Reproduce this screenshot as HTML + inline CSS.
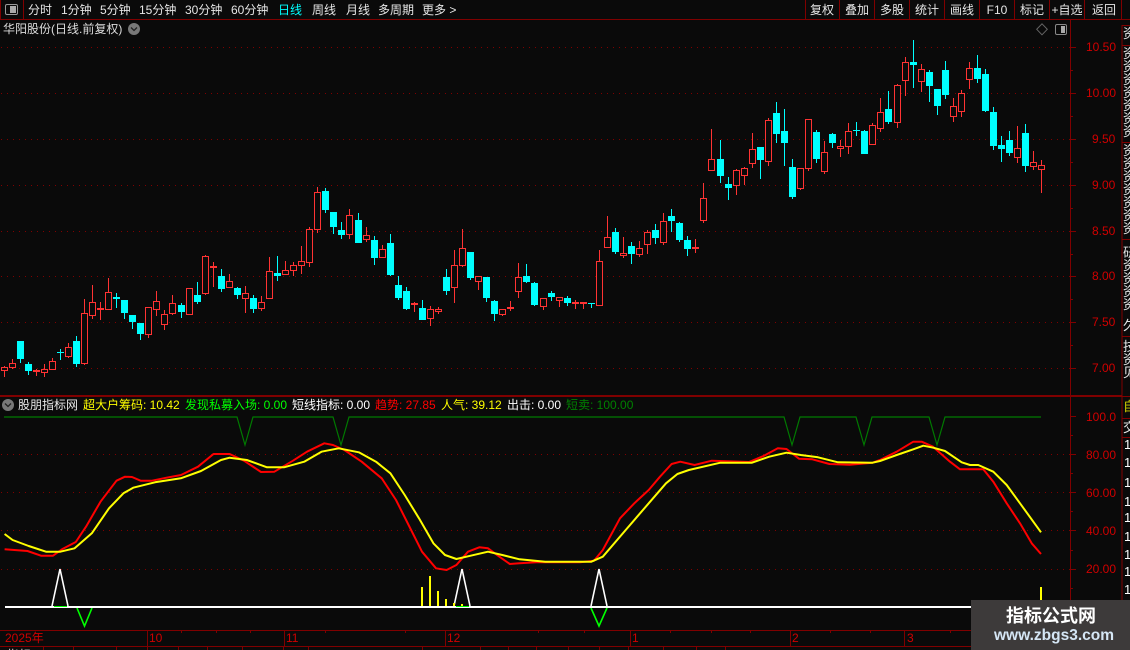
<!DOCTYPE html>
<html><head><meta charset="utf-8">
<style>
html,body{margin:0;padding:0;background:#0a0a0a;}
#r{position:relative;width:1130px;height:650px;overflow:hidden;background:#0a0a0a;font:12px/14px "Liberation Sans","WenQuanYi Zen Hei",sans-serif;color:#ddd;}
#r svg{position:absolute;left:0;top:0;}
.t{position:absolute;white-space:nowrap;}
.a{color:#d00000;left:1086px;}
.b{top:3px;color:#e6e6e6;}
.c{top:3px;width:34px;text-align:center;color:#e6e6e6;}
.i{top:398px;}
.d{top:631px;color:#d00000;}
.s{left:1123px;color:#e6e6e6;width:13px;font-size:13px;line-height:13px;white-space:normal;}
</style></head><body>
<div id="r">
<svg id="s" width="1130" height="650" viewBox="0 0 1130 650" shape-rendering="crispEdges">
<g id="grid" stroke="#800000" stroke-width="1" stroke-dasharray="1 5" fill="none">
<path d="M1 47.5H1070M1 93.5H1070M1 139.5H1070M1 185.5H1070M1 231.5H1070M1 276.5H1070M1 322.5H1070M1 368.5H1070M1 454.5H1070M1 492.5H1070M1 530.5H1070M1 569.5H1070"/>
</g>
<g stroke="#800000" stroke-width="1" fill="none">
<path d="M0 19.5H1130M0.5 0V19M23.5 0V19M805.5 0V19M839.5 0V19M874.5 0V19M909.5 0V19M944.5 0V19M979.5 0V19M1014.5 0V19M1049.5 0V19M1084.5 0V19M1121.5 0V19"/>
<path d="M1070.5 19V650M1122 25V650"/>
<path d="M1122 25.5H1130M1122 45.5H1130M1122 142.5H1130M1122 239.5H1130M1122 336.5H1130M1122 396.5H1130M1122 418.5H1130M1122 437.5H1130"/>
<path d="M1070 47.5h6M1070 93.5h6M1070 139.5h6M1070 185.5h6M1070 231.5h6M1070 276.5h6M1070 322.5h6M1070 368.5h6M1070 70.5h3M1070 116.5h3M1070 162.5h3M1070 208.5h3M1070 254.5h3M1070 299.5h3M1070 345.5h3"/>
<path d="M1070 416.5h6M1070 454.5h6M1070 492.5h6M1070 530.5h6M1070 569.5h6M1070 435.5h3M1070 473.5h3M1070 511.5h3M1070 550.5h3M1070 588.5h3"/>
<path d="M0 630.5H1070M0 646.5H1122"/>
<path d="M147.5 631V646M284.5 631V646M445.5 631V646M630.5 631V646M790.5 631V646M904.5 631V646"/>
<path d="M181.5 630v3M216.5 630v3M250.5 630v3M325.5 630v3M405.5 630v3M538.5 630v3M584.5 630v3M670.5 630v3M711.5 630v3M750.5 630v3M830.5 630v3M870.5 630v3M950.5 630v3M1000.5 630v3"/>
<path d="M43.5 647v3M73.5 647v3M116.5 647v3M147.5 647v3M178.5 647v3M207.5 647v3M242.5 647v3M283.5 647v3M308.5 647v3M422.5 647v3M480.5 647v3M508.5 647v3M536.5 647v3M568.5 647v3M599.5 647v3M628.5 647v3M663.5 647v3M696.5 647v3M725.5 647v3"/>
</g>
<rect x="0" y="395" width="1122" height="2" fill="#800000"/>
<g id="c"></g>
<g shape-rendering="auto" fill="none">
<polyline stroke="#007a00" stroke-width="1.2" points="4,417 237,417 245,445 253,417 333,417 341,445 349,417 784,417 792,445 800,417 856,417 864,445 872,417 929,417 937,445 945,417 1041,417"/>
<polyline stroke="#ff0000" stroke-width="2" stroke-linejoin="round" points="4.6,549.3 27.5,551 41,555.7 53,555.7 62,549.3 75.8,542 86,526.7 100.5,501.7 116.5,480.7 125,476.7 132,477 140.6,480.7 152,480.7 166.5,477.7 181,475 198,466.7 213.5,454 229.6,454 244,460.7 261,472 274.4,471.7 293,460.7 307,451.7 324.3,443.3 333,445 344.4,450 361.7,461.7 381.7,478.3 396,500 407.6,523 422,551.7 436,568.3 446.6,570 456.4,565 468,551.7 479.3,547.3 488,548.3 499.4,556.7 509.8,564 519.5,563.3 536.7,562.3 580,562.3 594,560.7 602.8,550 620,518.3 634.3,503.3 648.7,490 660,476.7 671.6,464 680.3,461.7 694.6,465 711.8,460.7 749,462 763.5,456 777.8,448.3 786.5,449 799,458.7 812.3,459.3 829.5,464 849.6,464.7 872.6,462.7 880,460 896.7,451.7 913.3,441.7 921.7,441.7 933,446.7 950,461.7 960,469.3 983.3,469.3 993.3,481.7 1006.7,503.3 1020,523.3 1031.7,543.3 1041,554"/>
<polyline stroke="#ffff00" stroke-width="2" stroke-linejoin="round" points="4.6,534 12.6,540 28.7,546 46,551.7 60.3,551.7 74.6,548.3 91.8,533.3 109,508.3 123.4,493.3 133.2,487.7 155,482.3 180.8,478.3 201,471 221,460 229.6,457.7 246.8,460 267,467.3 284,467.3 304.2,461.7 321.5,451.7 338.7,448.3 358.8,452.3 376,461.7 390.4,473.3 404.7,495 419,518.3 433.4,543.3 445,555 456.4,559 470.7,555.7 488,551.7 502.3,555 519.5,559.3 545.3,561.7 591.3,561.7 602.8,556.7 625.7,530 648.7,503.3 666,483.3 677.4,474 688.9,470 720.4,462.7 752,462.7 769.2,456.7 786.5,452.7 800.8,455 818,457.3 838,462.3 872.6,462.7 880,461 896.7,455 913.3,449.3 923.3,445.7 933.3,447.7 945,451 961.7,462.3 970,465 978.3,465 993.3,471.7 1006.7,485 1020,503.3 1041,532.3"/>
<path stroke="#fff" stroke-width="1.6" d="M52 606L60 569L68 606M454 606L462 569L470 606M591 606L599 569L607 606"/>
<path stroke="#00ff00" stroke-width="1.6" d="M77 608L84.5 626L92 608M591 608L599 626L607 608"/>
</g>
<rect x="5" y="606" width="1000" height="2" fill="#fff"/>
<path stroke="#00ff00" stroke-width="1" d="M54 606.5H67M456 606.5H469"/>
<path fill="#ffff00" d="M421 587h2v19h-2zM429 576h2v30h-2zM437 591h2v15h-2zM445 599h2v7h-2zM453 603h2v3h-2zM461 604h2v2h-2zM1040 587h2v19h-2z"/>
<rect x="971" y="600" width="159" height="50" fill="#3d3a3a"/>
<g shape-rendering="auto">
<rect x="5.5" y="4.5" width="12" height="10" rx="1.5" fill="none" stroke="#999"/><rect x="10" y="6" width="6" height="7" fill="#aaa"/>
<rect x="1055.5" y="24.5" width="11" height="10" rx="1.5" fill="none" stroke="#888"/><rect x="1061" y="26" width="4" height="7" fill="#aaa"/>
<path d="M1042 23.8L1047.3 29.3L1042 34.8L1036.7 29.3Z" fill="none" stroke="#666"/>
<circle cx="134" cy="29" r="6" fill="#787878"/><path d="M131 27.5L134 30.5L137 27.5" fill="none" stroke="#222" stroke-width="1.3"/>
<circle cx="8" cy="405" r="6" fill="#787878"/><path d="M5 403.5L8 406.5L11 403.5" fill="none" stroke="#222" stroke-width="1.3"/>
</g>
</svg>

<span class="t b" style="left:28px">分时</span>
<span class="t b" style="left:61px">1分钟</span>
<span class="t b" style="left:100px">5分钟</span>
<span class="t b" style="left:139px">15分钟</span>
<span class="t b" style="left:185px">30分钟</span>
<span class="t b" style="left:231px">60分钟</span>
<span class="t b" style="left:278px;color:#00ffff">日线</span>
<span class="t b" style="left:312px">周线</span>
<span class="t b" style="left:346px">月线</span>
<span class="t b" style="left:378px">多周期</span>
<span class="t b" style="left:422px">更多 &gt;</span>

<span class="t c" style="left:805px">复权</span>
<span class="t c" style="left:840px">叠加</span>
<span class="t c" style="left:875px">多股</span>
<span class="t c" style="left:910px">统计</span>
<span class="t c" style="left:945px">画线</span>
<span class="t c" style="left:980px">F10</span>
<span class="t c" style="left:1015px">标记</span>
<span class="t c" style="left:1050px">+自选</span>
<span class="t c" style="left:1087px">返回</span>

<span class="t" style="left:3px;top:22px;color:#dcdcdc">华阳股份(日线.前复权)</span>

<span class="t a" style="top:40px">10.50</span>
<span class="t a" style="top:86px">10.00</span>
<span class="t a" style="left:1092px;top:132px">9.50</span>
<span class="t a" style="left:1092px;top:178px">9.00</span>
<span class="t a" style="left:1092px;top:224px">8.50</span>
<span class="t a" style="left:1092px;top:269px">8.00</span>
<span class="t a" style="left:1092px;top:315px">7.50</span>
<span class="t a" style="left:1092px;top:361px">7.00</span>

<span class="t i" style="left:18px;color:#e6e6e6">股朋指标网</span>
<span class="t i" style="left:83px;color:#ffff00">超大户筹码: 10.42</span>
<span class="t i" style="left:185px;color:#00ff00">发现私募入场: 0.00</span>
<span class="t i" style="left:292px;color:#fff">短线指标: 0.00</span>
<span class="t i" style="left:375px;color:#ff0000">趋势: 27.85</span>
<span class="t i" style="left:441px;color:#ffff00">人气: 39.12</span>
<span class="t i" style="left:507px;color:#fff">出击: 0.00</span>
<span class="t i" style="left:566px;color:#008000">短卖: 100.00</span>

<span class="t a" style="top:410px">100.0</span>
<span class="t a" style="top:448px">80.00</span>
<span class="t a" style="top:486px">60.00</span>
<span class="t a" style="top:524px">40.00</span>
<span class="t a" style="top:562px">20.00</span>

<span class="t d" style="left:5px">2025年</span>
<span class="t d" style="left:149px">10</span>
<span class="t d" style="left:286px">11</span>
<span class="t d" style="left:447px">12</span>
<span class="t d" style="left:632px">1</span>
<span class="t d" style="left:792px">2</span>
<span class="t d" style="left:907px">3</span>
<span class="t" style="left:7px;top:648px;color:#ddd">指标</span>
<span class="t" style="left:50px;top:648px;color:#ddd">1</span>

<div class="t s" style="top:27px">资</div>
<div class="t s" style="top:47px">资<br>资<br>资<br>资<br>资<br>资<br>资</div>
<div class="t s" style="top:144px">资<br>资<br>资<br>资<br>资<br>资<br>资</div>
<div class="t s" style="top:246px">研<br>资<br>资<br>资<br>资</div>
<div class="t s" style="top:319px">久</div>
<div class="t s" style="top:340px">技<br>资<br>见</div>
<div class="t s" style="top:400px;color:#cccc00">自</div>
<div class="t s" style="top:421px">交</div>
<span class="t" style="left:1124px;top:438px;color:#fff;font-size:13px">1</span>
<span class="t" style="left:1124px;top:456px;color:#fff;font-size:13px">1</span>
<span class="t" style="left:1124px;top:476px;color:#fff;font-size:13px">1</span>
<span class="t" style="left:1124px;top:495px;color:#fff;font-size:13px">1</span>
<span class="t" style="left:1124px;top:511px;color:#fff;font-size:13px">1</span>
<span class="t" style="left:1124px;top:530px;color:#fff;font-size:13px">1</span>
<span class="t" style="left:1124px;top:548px;color:#fff;font-size:13px">1</span>
<span class="t" style="left:1124px;top:565px;color:#fff;font-size:13px">1</span>
<span class="t" style="left:1124px;top:583px;color:#fff;font-size:13px">1</span>

<span class="t" style="left:1006px;top:606px;font:bold 18px/20px 'Liberation Sans','Noto Sans CJK SC',sans-serif;color:#fff">指标公式网</span>
<span class="t" style="left:994px;top:628px;font:bold 15.5px/16px 'Liberation Sans',sans-serif;color:#d5e6f5">www.zbgs3.com</span>
</div>
<script>
var A=[
[0,558,562,572,590],[0,538,550,563,566],[1,483,483,537,549],[1,546,552,573,585],[0,566,571,575,587],[0,552,568,578,590],[0,534,544,569,570],[1,507,516,519,540],[0,489,502,530,533],[1,468,483,552,561],
[0,357,400,551,555],[0,315,367,407,417],[0,366,384,389,420],[0,294,337,389,389],[1,339,351,356,384],[1,360,360,399,417],[1,405,405,426,447],[1,429,429,462,480],[0,382,382,464,473],[0,333,364,389,408],
[0,390,403,434,450],[0,345,370,401,405],[1,369,375,396,414],[0,325,325,404,404],[1,306,345,366,372],[0,225,229,341,344],[0,246,259,264,321],[1,267,288,327,336],[0,282,304,323,323],[1,321,324,345,357],
[0,318,340,356,399],[1,345,354,387,399],[0,348,367,386,393],[0,231,274,356,356],[1,228,279,288,303],[0,243,271,284,285],[0,247,256,272,288],[0,198,244,257,282],[0,141,148,248,261],[0,21,37,149,159],
[1,24,33,90,99],[1,96,96,141,162],
[1,126,150,165,177],[0,87,106,164,177],[1,99,120,189,189],[0,141,166,179,186],[1,168,180,234,255],[0,195,208,233,233],[1,162,189,285,288],[1,288,315,354,360],[1,321,333,387,390],[0,367,370,376,396],
[1,360,384,420,420],[0,378,388,416,438],[0,381,388,395,402],[1,267,291,333,345],[0,210,256,323,369],[0,147,205,257,261],[1,216,216,294,300],[0,288,289,305,330],[1,291,291,354,366],[1,360,363,402,423],
[0,388,388,404,408],[0,363,382,388,393],[0,249,292,335,354],[1,252,288,306,309],[1,306,309,375,378],[0,355,355,380,390],[1,333,339,351,363],[0,352,352,362,381],[1,348,354,369,378],[0,360,367,371,387],
[0,366,367,371,387],[1,369,369,372,384],[0,210,244,377,377],[0,108,172,203,203],[1,144,156,216,222],[0,171,220,227,234],[1,186,198,222,252],[0,183,205,224,231],[0,150,157,194,222],[1,132,150,174,192],
[0,99,124,188,195],[1,87,108,123,156],[1,126,129,180,186],[1,168,180,207,228],[0,177,202,208,219],[0,9,55,124,129]];
var B=[
[0,297,388,422,422],[1,330,387,438,459],[1,441,462,474,510],[0,417,421,467,495],[0,411,415,437,465],[0,309,358,401,414],[1,351,351,390,447],[0,264,271,395,408],[1,216,249,312,339],[1,237,303,339,408],
[1,387,411,501,507],[0,415,415,476,480],[0,268,268,416,423],[1,300,306,387,399],[0,333,367,425,432],[1,309,312,339,354],[0,330,349,356,381],[0,279,304,350,372],[1,276,300,303,318],[1,300,303,372,372],
[0,279,286,344,345],[0,204,247,296,306],[1,183,237,276,282],[0,163,166,278,294],[0,81,97,152,198],[1,30,96,105,174],[0,102,118,155,186],[1,120,126,168,216],[1,177,177,228,255],[1,93,120,195,207],
[0,204,229,260,276],[0,180,190,245,261],[0,96,115,149,177],[1,75,114,147,159],[1,117,132,243,246],[1,231,246,348,360],[1,318,345,357,396],[1,303,330,369,378],[0,288,355,383,399],[1,282,309,408,426],
[0,363,397,410,420],[0,390,406,419,489]];
var h='',R='#ff3333',C='#00ffff';
function put(d,i,b){
 var cx=4+8*i+Math.floor((i+0.65)/22.3),
 hi=Math.round(b+d[1]/3),top=Math.round(b+d[2]/3),bot=Math.round(b+d[3]/3),lo=Math.round(b+d[4]/3);
 if(bot<=top)bot=top+1;
 var col=d[0]?C:R;
 h+='<rect x="'+cx+'" y="'+hi+'" width="1" height="'+Math.max(lo-hi,1)+'" fill="'+col+'"/>';
 if(d[0]||bot-top<=2){
  h+='<rect x="'+(cx-3)+'" y="'+top+'" width="7" height="'+(bot-top)+'" fill="'+col+'"/>';
 }else{
  h+='<rect x="'+(cx-3)+'" y="'+top+'" width="7" height="'+(bot-top)+'" fill="#0a0a0a"/>';
  h+='<rect x="'+(cx-2.5)+'" y="'+(top+.5)+'" width="6" height="'+(bot-top-1)+'" fill="none" stroke="'+R+'" stroke-width="1"/>';
 }
}
A.forEach(function(d,i){put(d,i,180)});
B.forEach(function(d,i){put(d,i+88,30)});
document.getElementById('c').innerHTML=h;
</script>
</body></html>
